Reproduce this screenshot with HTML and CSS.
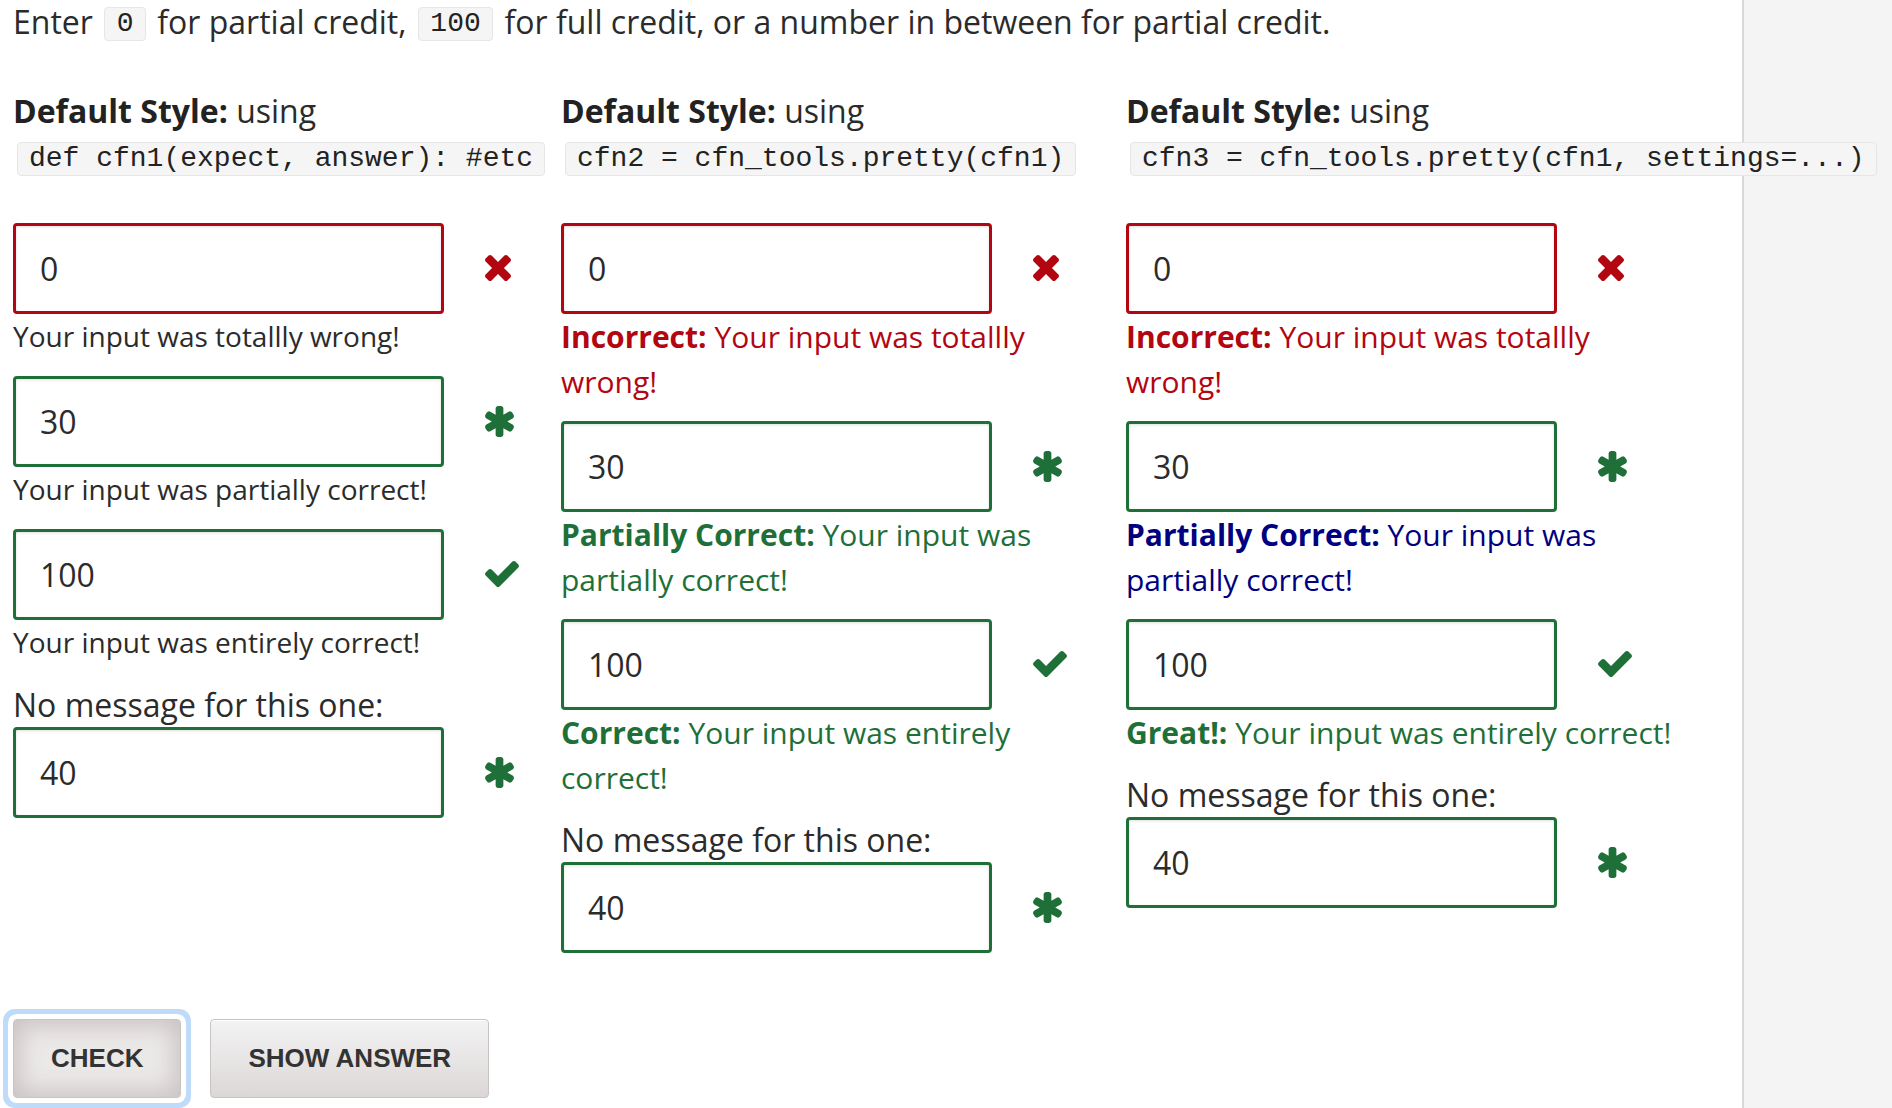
FILE: index.html
```html
<!DOCTYPE html>
<html lang="en">
<head>
<meta charset="utf-8">
<title>Custom feedback styles</title>
<link rel="stylesheet" href="styles.css">
</head>
<body>
<div class="page">
  <main class="main">
    <p class="intro">Enter <code class="code code-inline">0</code> for partial credit, <code class="code code-inline">100</code> for full credit, or a number in between for partial credit.</p>

    <div class="columns">
      <section class="col col-plain">
        <div class="col-head"><b>Default Style:</b> using</div>
        <code class="code code-block">def cfn1(expect, answer): #etc</code>
        <div class="problems">
          <div class="item">
            <div class="field">
              <input class="answer is-wrong" type="text" value="0">
              <svg class="icon icon-times is-wrong" viewBox="110 366 1188 1188"><path d="M1298 1322q0 40-28 68l-136 136q-28 28-68 28t-68-28l-294-294-294 294q-28 28-68 28t-68-28l-136-136q-28-28-28-68t28-68l294-294-294-294q-28-28-28-68t28-68l136-136q28-28 68-28t68 28l294 294 294-294q28-28 68-28t68 28l136 136q28 28 28 68t-28 68l-294 294 294 294q28 28 28 68z"/></svg>
            </div>
            <div class="msg">Your input was totallly wrong!</div>
          </div>
          <div class="item">
            <div class="field">
              <input class="answer is-right" type="text" value="30">
              <svg class="icon icon-asterisk is-right" viewBox="180 128 1432 1536"><path d="M1546 1050q46 26 59.5 77.5t-12.5 97.5l-64 110q-26 46-77.5 59.5t-97.5-12.5l-266-153v307q0 52-38 90t-90 38h-128q-52 0-90-38t-38-90v-307l-266 153q-46 26-97.5 12.5t-77.5-59.5l-64-110q-26-46-12.5-97.5t59.5-77.5l266-154-266-154q-46-26-59.5-77.5t12.5-97.5l64-110q26-46 77.5-59.5t97.5 12.5l266 153v-307q0-52 38-90t90-38h128q52 0 90 38t38 90v307l266-153q46-26 97.5-12.5t77.5 59.5l64 110q26 46 12.5 97.5t-59.5 77.5l-266 154z"/></svg>
            </div>
            <div class="msg">Your input was partially correct!</div>
          </div>
          <div class="item">
            <div class="field">
              <input class="answer is-right" type="text" value="100">
              <svg class="icon icon-check is-right" viewBox="121 334 1550 1188"><path d="M1671 566q0 40-28 68l-724 724-136 136q-28 28-68 28t-68-28l-136-136-362-362q-28-28-28-68t28-68l136-136q28-28 68-28t68 28l294 295 656-657q28-28 68-28t68 28l136 136q28 28 28 68z"/></svg>
            </div>
            <div class="msg">Your input was entirely correct!</div>
          </div>
          <div class="item">
            <div class="label">No message for this one:</div>
            <div class="field">
              <input class="answer is-right" type="text" value="40">
              <svg class="icon icon-asterisk is-right" viewBox="180 128 1432 1536"><path d="M1546 1050q46 26 59.5 77.5t-12.5 97.5l-64 110q-26 46-77.5 59.5t-97.5-12.5l-266-153v307q0 52-38 90t-90 38h-128q-52 0-90-38t-38-90v-307l-266 153q-46 26-97.5 12.5t-77.5-59.5l-64-110q-26-46-12.5-97.5t59.5-77.5l266-154-266-154q-46-26-59.5-77.5t12.5-97.5l64-110q26-46 77.5-59.5t97.5 12.5l266 153v-307q0-52 38-90t90-38h128q52 0 90 38t38 90v307l266-153q46-26 97.5-12.5t77.5 59.5l64 110q26 46 12.5 97.5t-59.5 77.5l-266 154z"/></svg>
            </div>
          </div>
        </div>
      </section>

      <section class="col col-pretty">
        <div class="col-head"><b>Default Style:</b> using</div>
        <code class="code code-block">cfn2 = cfn_tools.pretty(cfn1)</code>
        <div class="problems">
          <div class="item">
            <div class="field">
              <input class="answer is-wrong" type="text" value="0">
              <svg class="icon icon-times is-wrong" viewBox="110 366 1188 1188"><path d="M1298 1322q0 40-28 68l-136 136q-28 28-68 28t-68-28l-294-294-294 294q-28 28-68 28t-68-28l-136-136q-28-28-28-68t28-68l294-294-294-294q-28-28-28-68t28-68l136-136q28-28 68-28t68 28l294 294 294-294q28-28 68-28t68 28l136 136q28 28 28 68t-28 68l-294 294 294 294q28 28 28 68z"/></svg>
            </div>
            <div class="msg msg-wrong"><b>Incorrect:</b> Your input was totallly wrong!</div>
          </div>
          <div class="item">
            <div class="field">
              <input class="answer is-right" type="text" value="30">
              <svg class="icon icon-asterisk is-right" viewBox="180 128 1432 1536"><path d="M1546 1050q46 26 59.5 77.5t-12.5 97.5l-64 110q-26 46-77.5 59.5t-97.5-12.5l-266-153v307q0 52-38 90t-90 38h-128q-52 0-90-38t-38-90v-307l-266 153q-46 26-97.5 12.5t-77.5-59.5l-64-110q-26-46-12.5-97.5t59.5-77.5l266-154-266-154q-46-26-59.5-77.5t12.5-97.5l64-110q26-46 77.5-59.5t97.5 12.5l266 153v-307q0-52 38-90t90-38h128q52 0 90 38t38 90v307l266-153q46-26 97.5-12.5t77.5 59.5l64 110q26 46 12.5 97.5t-59.5 77.5l-266 154z"/></svg>
            </div>
            <div class="msg msg-right"><b>Partially Correct:</b> Your input was partially correct!</div>
          </div>
          <div class="item">
            <div class="field">
              <input class="answer is-right" type="text" value="100">
              <svg class="icon icon-check is-right" viewBox="121 334 1550 1188"><path d="M1671 566q0 40-28 68l-724 724-136 136q-28 28-68 28t-68-28l-136-136-362-362q-28-28-28-68t28-68l136-136q28-28 68-28t68 28l294 295 656-657q28-28 68-28t68 28l136 136q28 28 28 68z"/></svg>
            </div>
            <div class="msg msg-right"><b>Correct:</b> Your input was entirely correct!</div>
          </div>
          <div class="item">
            <div class="label">No message for this one:</div>
            <div class="field">
              <input class="answer is-right" type="text" value="40">
              <svg class="icon icon-asterisk is-right" viewBox="180 128 1432 1536"><path d="M1546 1050q46 26 59.5 77.5t-12.5 97.5l-64 110q-26 46-77.5 59.5t-97.5-12.5l-266-153v307q0 52-38 90t-90 38h-128q-52 0-90-38t-38-90v-307l-266 153q-46 26-97.5 12.5t-77.5-59.5l-64-110q-26-46-12.5-97.5t59.5-77.5l266-154-266-154q-46-26-59.5-77.5t12.5-97.5l64-110q26-46 77.5-59.5t97.5 12.5l266 153v-307q0-52 38-90t90-38h128q52 0 90 38t38 90v307l266-153q46-26 97.5-12.5t77.5 59.5l64 110q26 46 12.5 97.5t-59.5 77.5l-266 154z"/></svg>
            </div>
          </div>
        </div>
      </section>

      <section class="col col-pretty">
        <div class="col-head"><b>Default Style:</b> using</div>
        <code class="code code-block">cfn3 = cfn_tools.pretty(cfn1, settings=...)</code>
        <div class="problems">
          <div class="item">
            <div class="field">
              <input class="answer is-wrong" type="text" value="0">
              <svg class="icon icon-times is-wrong" viewBox="110 366 1188 1188"><path d="M1298 1322q0 40-28 68l-136 136q-28 28-68 28t-68-28l-294-294-294 294q-28 28-68 28t-68-28l-136-136q-28-28-28-68t28-68l294-294-294-294q-28-28-28-68t28-68l136-136q28-28 68-28t68 28l294 294 294-294q28-28 68-28t68 28l136 136q28 28 28 68t-28 68l-294 294 294 294q28 28 28 68z"/></svg>
            </div>
            <div class="msg msg-wrong"><b>Incorrect:</b> Your input was totallly wrong!</div>
          </div>
          <div class="item">
            <div class="field">
              <input class="answer is-right" type="text" value="30">
              <svg class="icon icon-asterisk is-right" viewBox="180 128 1432 1536"><path d="M1546 1050q46 26 59.5 77.5t-12.5 97.5l-64 110q-26 46-77.5 59.5t-97.5-12.5l-266-153v307q0 52-38 90t-90 38h-128q-52 0-90-38t-38-90v-307l-266 153q-46 26-97.5 12.5t-77.5-59.5l-64-110q-26-46-12.5-97.5t59.5-77.5l266-154-266-154q-46-26-59.5-77.5t12.5-97.5l64-110q26-46 77.5-59.5t97.5 12.5l266 153v-307q0-52 38-90t90-38h128q52 0 90 38t38 90v307l266-153q46-26 97.5-12.5t77.5 59.5l64 110q26 46 12.5 97.5t-59.5 77.5l-266 154z"/></svg>
            </div>
            <div class="msg msg-partial"><b>Partially Correct:</b> Your input was partially correct!</div>
          </div>
          <div class="item">
            <div class="field">
              <input class="answer is-right" type="text" value="100">
              <svg class="icon icon-check is-right" viewBox="121 334 1550 1188"><path d="M1671 566q0 40-28 68l-724 724-136 136q-28 28-68 28t-68-28l-136-136-362-362q-28-28-28-68t28-68l136-136q28-28 68-28t68 28l294 295 656-657q28-28 68-28t68 28l136 136q28 28 28 68z"/></svg>
            </div>
            <div class="msg msg-right"><b>Great!:</b> Your input was entirely correct!</div>
          </div>
          <div class="item">
            <div class="label">No message for this one:</div>
            <div class="field">
              <input class="answer is-right" type="text" value="40">
              <svg class="icon icon-asterisk is-right" viewBox="180 128 1432 1536"><path d="M1546 1050q46 26 59.5 77.5t-12.5 97.5l-64 110q-26 46-77.5 59.5t-97.5-12.5l-266-153v307q0 52-38 90t-90 38h-128q-52 0-90-38t-38-90v-307l-266 153q-46 26-97.5 12.5t-77.5-59.5l-64-110q-26-46-12.5-97.5t59.5-77.5l266-154-266-154q-46-26-59.5-77.5t12.5-97.5l64-110q26-46 77.5-59.5t97.5 12.5l266 153v-307q0-52 38-90t90-38h128q52 0 90 38t38 90v307l266-153q46-26 97.5-12.5t77.5 59.5l64 110q26 46 12.5 97.5t-59.5 77.5l-266 154z"/></svg>
            </div>
          </div>
        </div>
      </section>
    </div>

    <div class="actions">
      <button class="btn btn-check" type="button">Check</button>
      <button class="btn btn-show" type="button">Show Answer</button>
    </div>
  </main>
  <aside class="sidebar"></aside>
</div>
</body>
</html>
```

FILE: styles.css
```css
html, body {
  margin: 0;
  padding: 0;
  height: 100%;
  background: #fff;
}

body {
  font-family: "Open Sans", "Noto Sans", sans-serif;
  font-size: 32px;
  line-height: 1.4;
  color: #2b2b2b;
  overflow: hidden;
}

.page {
  display: flex;
  min-height: 100%;
}

.main {
  flex: 0 0 1729px;
  padding-left: 13px;
}

.sidebar {
  flex: 1 1 auto;
  background: #f4f4f4;
  border-left: 2px solid #d9d9d9;
}

.intro {
  margin: 0;
  white-space: nowrap;
}

.code {
  font-family: "Liberation Mono", "Courier New", monospace;
  font-size: 28px;
  line-height: 32px;
  color: #222;
  background: #f5f5f5;
  border: 1px solid #e6e6e6;
  border-radius: 4px;
  padding: 0 11px;
  white-space: pre;
}

.code-inline {
  display: inline-block;
  vertical-align: top;
  margin: 7px 3px 0;
  padding: 0 11.5px;
}

.columns {
  display: grid;
  grid-template-columns: 548px 565px 550px;
  margin-top: 44px;
}

.col {
  display: flex;
  flex-direction: column;
  align-items: flex-start;
}

.col-head {
  line-height: 1.4;
}

.col-head b {
  font-weight: 700;
  color: #222;
}

.code-block {
  display: inline-block;
  margin: 8px 0 0 4px;
  position: relative;
  z-index: 1;
}

.problems {
  margin-top: 47px;
  display: flex;
  flex-direction: column;
}

.item {
  margin-bottom: 17px;
}

.field {
  display: flex;
  align-items: center;
}

.answer {
  box-sizing: border-box;
  width: 431px;
  height: 91px;
  margin: 0;
  padding: 0 0 0 24px;
  font-family: "Open Sans", "Noto Sans", sans-serif;
  font-size: 32px;
  color: #2b2b2b;
  background: #fff;
  border: 3px solid #1f6f38;
  border-radius: 4px;
  box-shadow: inset 0 1px 3px rgba(0, 0, 0, 0.12);
  outline: none;
}

.answer.is-wrong {
  border-color: #b20610;
}

.answer.is-right {
  border-color: #1f6f38;
}

.icon {
  margin-left: 41px;
  fill: currentColor;
  display: block;
}

.icon.is-wrong { color: #b20610; }
.icon.is-right { color: #1f6f38; }

.icon-times {
  width: 26px;
  height: 26px;
}

.icon-asterisk {
  width: 29px;
  height: 31px;
}

.icon-check {
  width: 34px;
  height: 26px;
}

.msg {
  font-size: 28px;
  line-height: 45px;
  max-width: 550px;
}

.col-pretty .msg {
  font-size: 30px;
}

.msg b {
  font-weight: 700;
}

.msg-wrong { color: #b20610; }
.msg-right { color: #1f6f38; }
.msg-partial { color: #000080; }

.label {
  line-height: 45px;
}

.actions {
  display: flex;
  gap: 29px;
  margin-top: 49px;
}

.btn {
  box-sizing: border-box;
  height: 79px;
  padding: 0 37px;
  font-family: "Liberation Sans", Arial, sans-serif;
  font-size: 26px;
  font-weight: 700;
  text-transform: uppercase;
  color: #333;
  border: 1px solid #c9c3c3;
  border-radius: 4px;
  cursor: pointer;
}

.btn-check {
  background: #ebe8e8;
  box-shadow: inset 0 0 22px 6px #cbc3c3, 0 0 0 5px #fff, 0 0 0 10px #bedcfa;
}

.btn-show {
  background: linear-gradient(#f3f3f3, #dcd7d7);
  box-shadow: inset 0 1px 0 #fff;
}
```
